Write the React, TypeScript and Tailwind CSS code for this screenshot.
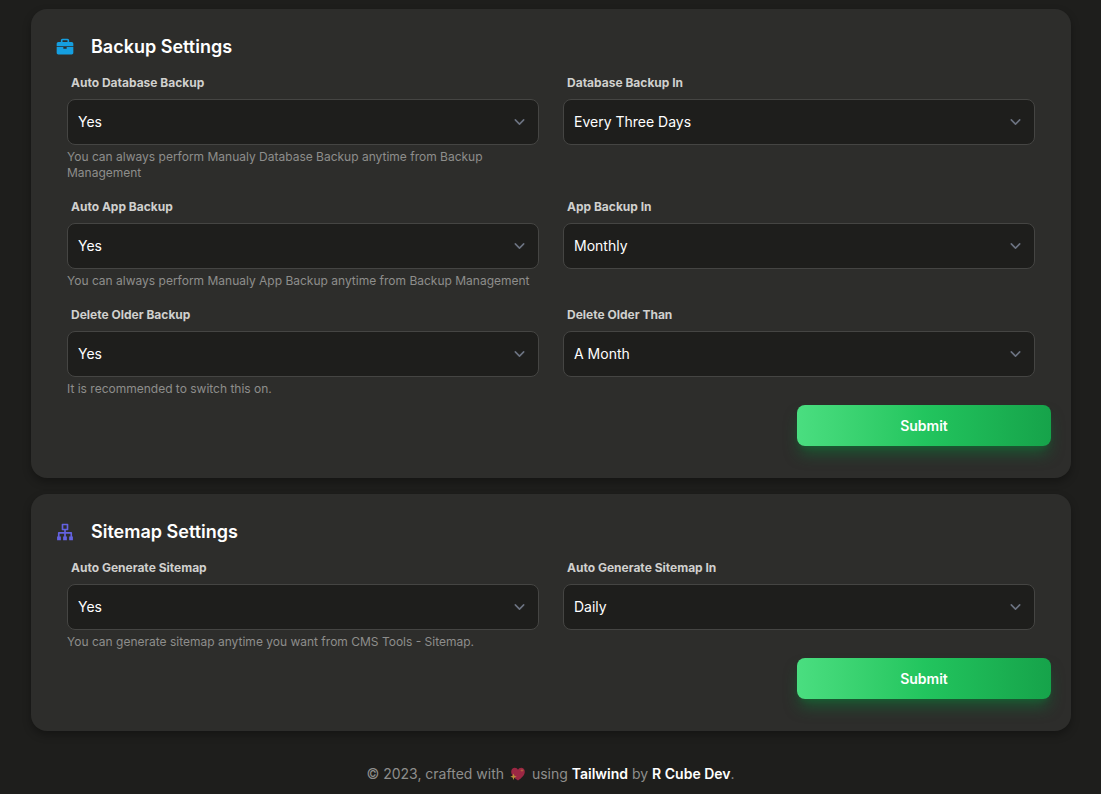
import type { ReactNode } from 'react';
import { BiSolidBriefcase } from 'react-icons/bi';

type FieldProps = {
  id: string;
  label: string;
  options: string[];
  help?: string;
};

function Field({ id, label, options, help }: FieldProps) {
  return (
    <div className="flex flex-col">
      <label htmlFor={id} className="mb-2 ml-1 text-[12px] leading-4 font-bold text-[#d0d0ce]">
        {label}
      </label>
      <div className="relative">
        <select
          id={id}
          className="block h-[46px] w-full appearance-none rounded-lg border border-[#454543] bg-[#1e1e1c] pr-10 pb-[2px] pl-[10px] text-[14px] text-white outline-none"
        >
          {options.map((option) => (
            <option key={option}>{option}</option>
          ))}
        </select>
        <svg
          viewBox="0 0 20 20"
          className="pointer-events-none absolute top-1/2 right-[9px] size-[21px] -translate-y-1/2"
          fill="none"
          stroke="#6b7280"
          strokeWidth="1.5"
          strokeLinecap="round"
          strokeLinejoin="round"
          aria-hidden="true"
        >
          <path d="M6 8l4 4 4-4" />
        </svg>
      </div>
      {help && <p className="mt-1 text-[12px] leading-4 text-[#8e8e8c]">{help}</p>}
    </div>
  );
}

function SitemapIcon() {
  return (
    <svg viewBox="0 0 24 24" className="size-5 shrink-0 text-[#6462e0]" fill="none" aria-hidden="true">
      <path d="M9 3h6v6H9zM12 9v9M4.500 18v-5h15v5" stroke="currentColor" strokeWidth="2" strokeLinejoin="round" />
      <path d="M2.500 17.500h4.500V22H2.500zM9.750 17.500h4.500V22h-4.500zM17 17.500h4.500V22H17z" fill="currentColor" />
    </svg>
  );
}

type CardProps = { icon: ReactNode; title: string; children: ReactNode };

function SettingsCard({ icon, title, children }: CardProps) {
  return (
    <form
      className="rounded-2xl bg-[#2d2d2b] pt-[22px] pb-8 shadow-[0_4px_8px_rgba(0,0,0,0.3)]"
      onSubmit={(event) => event.preventDefault()}
    >
      <h2 className="flex items-center gap-4 px-6 text-[18px] leading-8 font-semibold text-white">
        {icon}
        {title}
      </h2>
      <div className="grid grid-cols-2 gap-x-6 gap-y-[18px] px-9 pt-3">{children}</div>
      <div className="mt-2 flex justify-end pr-5 pl-1">
        <button
          type="submit"
          className="h-[41px] w-1/4 rounded-lg bg-linear-to-r from-[#4ade80] via-[#22c55e] to-[#16a34a] text-[14px] font-semibold text-white shadow-[0_10px_15px_-3px_rgba(22,101,52,0.8),0_4px_6px_-4px_rgba(22,101,52,0.8)]"
        >
          Submit
        </button>
      </div>
    </form>
  );
}

function SparklingHeart() {
  return (
    <svg viewBox="0 0 16 16" className="mx-0.5 inline-block size-4 align-[-3px]" role="img" aria-label="love">
      <path
        d="M8 14.5C4.5 12 1.2 9.300 1.200 5.700 1.200 3.200 2.900 1.700 4.800 1.700c1.500 0 2.600.8 3.200 2 .6-1.200 1.700-2 3.200-2 1.900 0 3.600 1.500 3.600 4C14.800 9.300 11.500 12 8 14.500z"
        fill="#9b2743"
      />
      <path d="M3.500 7.500l.9 2.300 2.300.9-2.300.9-.9 2.300-.9-2.300-2.300-.9 2.300-.9z" fill="#b98c3a" />
      <path d="M12 2.500l.5 1.400 1.400.5-1.400.5-.5 1.400-.5-1.400-1.400-.5 1.400-.5z" fill="#b5643f" />
    </svg>
  );
}

const yesNo = ['Yes', 'No'];

export default function App() {
  return (
    <div className="min-h-screen bg-[#1e1e1c] px-[30px] pt-[9px] font-['Inter',sans-serif]">
      <main className="ml-px flex flex-col gap-4">
        <SettingsCard title="Backup Settings" icon={<BiSolidBriefcase className="size-5 shrink-0 text-[#159fe0]" />}>
          <Field
            id="auto-db"
            label="Auto Database Backup"
            options={yesNo}
            help="You can always perform Manualy Database Backup anytime from Backup Management"
          />
          <Field id="db-in" label="Database Backup In" options={['Every Three Days', 'Daily', 'Weekly', 'Monthly']} />
          <Field
            id="auto-app"
            label="Auto App Backup"
            options={yesNo}
            help="You can always perform Manualy App Backup anytime from Backup Management"
          />
          <Field id="app-in" label="App Backup In" options={['Monthly', 'Weekly', 'Daily']} />
          <Field
            id="delete-old"
            label="Delete Older Backup"
            options={yesNo}
            help="It is recommended to switch this on."
          />
          <Field id="older-than" label="Delete Older Than" options={['A Month', 'A Week', 'A Year']} />
        </SettingsCard>
        <SettingsCard title="Sitemap Settings" icon={<SitemapIcon />}>
          <Field
            id="auto-sitemap"
            label="Auto Generate Sitemap"
            options={yesNo}
            help="You can generate sitemap anytime you want from CMS Tools - Sitemap."
          />
          <Field id="sitemap-in" label="Auto Generate Sitemap In" options={['Daily', 'Weekly', 'Monthly']} />
        </SettingsCard>
      </main>
      <footer className="pt-[31px] text-center text-[14px] leading-6 text-[#8e8e8c]">
        © 2023, crafted with <SparklingHeart /> using{' '}
        <a href="#tailwind" className="font-semibold text-white">
          Tailwind
        </a>{' '}
        by{' '}
        <a href="#rcube" className="font-semibold text-white">
          R Cube Dev
        </a>
        .
      </footer>
    </div>
  );
}
